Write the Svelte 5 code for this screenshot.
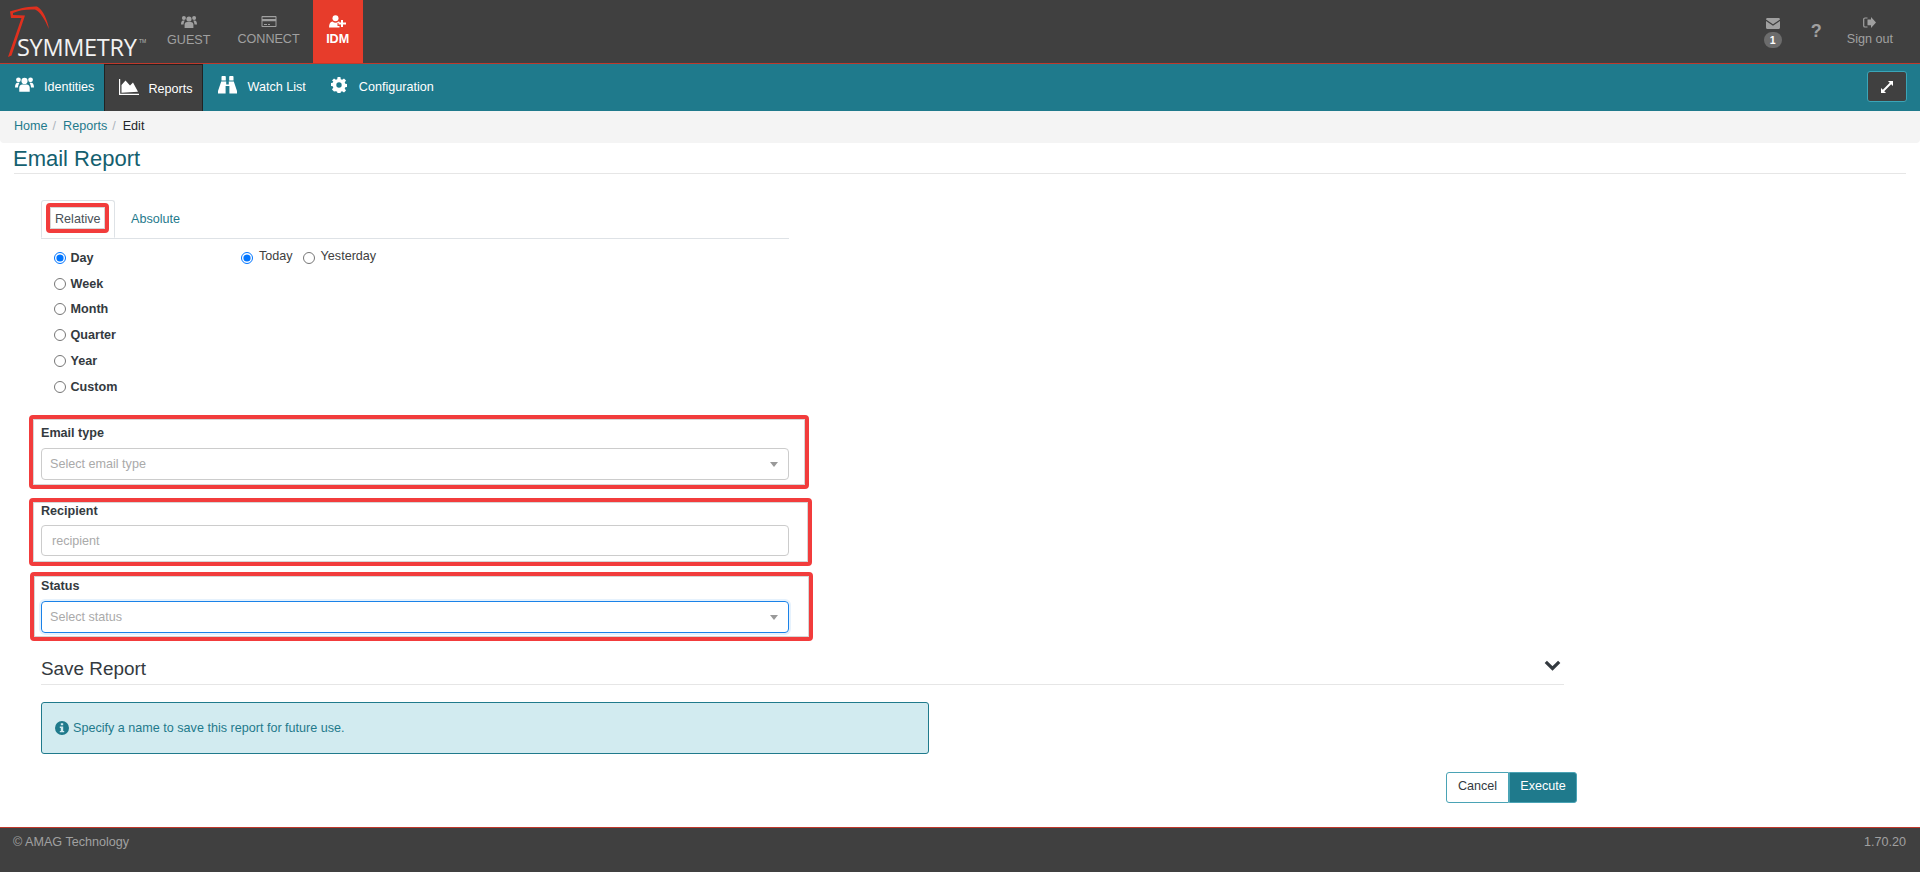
<script lang="ts">
  const ranges = ['Day', 'Week', 'Month', 'Quarter', 'Year', 'Custom'];
  let range = $state('Day');
  let when = $state('Today');
</script>

<div class="page">
  <header class="topbar">
    <div class="logo">
      <svg width="60" height="60" viewBox="0 0 60 60" class="eagle">
        <path d="M6 57 L19.5 18 L9 18 L8 11.5 C14 9.5 26 6 35 6.5 C41 10 45 19 47 29 C43 20 38 11 33 9.5 C26 9 17 10 11 13 L11 15 L23 15.5 L9.5 55.5 Z" fill="#e0301e" />
      </svg>
      <span class="wordmark">SYMMETRY</span><span class="tm">TM</span>
    </div>
    <a class="app guest" href="#guest">
      <svg width="16" height="14" viewBox="0 0 16 14"><circle cx="8" cy="4" r="2.6" /><circle cx="2.9" cy="3" r="2" /><circle cx="13.1" cy="3" r="2" /><path d="M3.6 13V9.5C3.6 7.8 5 7 6 7h4c1 0 2.400.8 2.400 2.500V13ZM0 9.500C0 7 .9 5.600 2.200 5.600h1.600C3.400 6.400 2.700 7.200 2.500 9.500ZM16 9.500C16 7 15.100 5.600 13.800 5.600h-1.600c.4.800 1.100 1.600 1.300 3.900Z" /></svg>
      <span>GUEST</span>
    </a>
    <a class="app connect" href="#connect">
      <svg width="16" height="13" viewBox="0 0 16 13"><path fill-rule="evenodd" d="M1.500 1h13c.6 0 1 .4 1 1v9c0 .6-.4 1-1 1h-13c-.6 0-1-.4-1-1V2c0-.6.4-1 1-1Zm0 1.200V4h13V2.200Zm0 4V11h13V6.200ZM3 9h3v1H3Zm4 0h2v1H7Z" /></svg>
      <span>CONNECT</span>
    </a>
    <a class="app idm" href="#idm">
      <svg width="17" height="13" viewBox="0 0 17 13"><circle cx="6.500" cy="3.200" r="3" /><path d="M0 12.500C0 8.500 1.500 6.500 3.500 6.500c1 .8 1.900 1.200 3 1.200s2-.4 3-1.200c.4 0 .7.100 1 .2V8H8.500v3h2v1.500Z" /><path d="M12 5h2v2.500h3v2h-3V12h-2V9.500H9.500v-2H12Z" /></svg>
      <span>IDM</span>
    </a>
    <div class="top-right">
      <div class="mail">
        <svg width="14" height="11" viewBox="0 0 14 11"><path d="M0 1.500C0 .7.600 0 1.400 0h11.200c.8 0 1.400.7 1.400 1.500L7 6.200ZM0 3l7 4.700L14 3v6.500c0 .8-.6 1.500-1.400 1.500H1.400C.6 11 0 10.300 0 9.500Z" /></svg>
        <span class="badge">1</span>
      </div>
      <span class="help">?</span>
      <div class="signout">
        <svg width="13" height="11" viewBox="0 0 13 11"><path d="M8 2.500V0l5 5.500L8 11V8.300H4.500V2.500Z" /><path d="M4.500 1H2C1.300 1 .7 1.500.7 2.300v6.400C.7 9.500 1.300 10 2 10h2.500" fill="none" stroke="#a0a0a0" stroke-width="1.200" /></svg>
        <span>Sign out</span>
      </div>
    </div>
  </header>

  <nav class="mainnav">
    <a href="#identities">
      <svg width="19" height="17" viewBox="0 0 16 14"><circle cx="8" cy="4" r="2.600" /><circle cx="2.900" cy="3" r="2" /><circle cx="13.100" cy="3" r="2" /><path d="M3.600 13V9.500C3.600 7.800 5 7 6 7h4c1 0 2.400.8 2.400 2.500V13ZM0 9.500C0 7 .9 5.600 2.200 5.600h1.600C3.400 6.400 2.700 7.200 2.500 9.500ZM16 9.500C16 7 15.100 5.600 13.800 5.600h-1.600c.4.800 1.100 1.600 1.300 3.900Z" /></svg>
      Identities
    </a>
    <a class="active" href="#reports">
      <svg width="20" height="16" viewBox="0 0 20 16"><path d="M0 0h1.200v14.800H20V16H0Z" /><path d="M2.500 13.800V6l4-4.500 4.500 5 3-3 5 9.300Z" /></svg>
      Reports
    </a>
    <a href="#watch">
      <svg width="19" height="18" viewBox="0 0 19 18"><path d="M3.500 1c0-.6.400-1 1-1h2.300c.6 0 1 .4 1 1v3.500H3.500ZM11.200 1c0-.6.400-1 1-1h2.300c.6 0 1 .4 1 1v3.500h-4.300ZM3.200 5.500h5v3h2.600v-3h5L19 15v2.500h-7.600V10H7.600v7.500H0V15Z" /></svg>
      Watch List
    </a>
    <a href="#config">
      <svg width="16" height="16" viewBox="0 0 16 16"><path fill-rule="evenodd" d="M6.600 0h2.800l.4 2.200 1.300.6L13 1.500l2 2-1.300 1.900.6 1.300 2.200.4v2.800l-2.200.4-.6 1.300 1.300 1.900-2 2-1.900-1.300-1.300.6-.4 2.200H6.600l-.4-2.200-1.300-.6L3 14.500l-2-2 1.300-1.900-.6-1.300L-.5 9V6.200l2.200-.4.600-1.300L1 3.500l2-2 1.900 1.300 1.300-.6ZM8 5.300a2.700 2.700 0 1 0 0 5.400 2.700 2.700 0 0 0 0-5.400Z" /></svg>
      Configuration
    </a>
    <button class="expand" aria-label="Expand">
      <svg width="12" height="12" viewBox="0 0 13 13"><path d="M7.500 0H13v5.500l-2-2-7.500 7.500 2 2H0V7.500l2 2L9.500 2Z" /></svg>
    </button>
  </nav>

  <div class="crumbs">
    <a href="#home">Home</a><span class="sep">/</span>
    <a href="#reports">Reports</a><span class="sep">/</span>
    <span class="current">Edit</span>
  </div>

  <main>
    <h1>Email Report</h1>

    <div class="form">
      <div class="tabs">
        <span class="tab on">Relative</span>
        <a class="tab" href="#absolute">Absolute</a>
      </div>

      <div class="period">
        <div class="ranges">
          {#each ranges as r}
            <label><input type="radio" name="range" value={r} bind:group={range} /> {r}</label>
          {/each}
        </div>
        <div class="days">
          <label><input type="radio" name="when" value="Today" bind:group={when} /> Today</label>
          <label><input type="radio" name="when" value="Yesterday" bind:group={when} /> Yesterday</label>
        </div>
      </div>

      <div class="field first">
        <span class="lbl">Email type</span>
        <div class="select">Select email type<i class="caret"></i></div>
      </div>
      <div class="field second">
        <span class="lbl">Recipient</span>
        <input class="text" placeholder="recipient" />
      </div>
      <div class="field third">
        <span class="lbl">Status</span>
        <div class="select focus">Select status<i class="caret"></i></div>
      </div>

      <!-- annotation boxes sit on top of the form -->
      <div class="mark m-tab"></div>
      <div class="mark m-type"></div>
      <div class="mark m-recipient"></div>
      <div class="mark m-status"></div>
    </div>

    <div class="save">
      <h2>Save Report</h2>
      <svg width="17" height="11" viewBox="0 0 17 11"><path d="M1.800 1.800 8.500 8.500l6.700-6.700" fill="none" stroke="#343a40" stroke-width="3.200" /></svg>
    </div>

    <div class="alert">
      <svg width="14" height="14" viewBox="0 0 14 14"><path fill-rule="evenodd" d="M7 0a7 7 0 1 1 0 14A7 7 0 0 1 7 0ZM5.800 2.300v2h2.400v-2ZM4.800 5.600v1.300h1v3h-1v1.300h4.400v-1.300h-1V5.600Z" /></svg>
      Specify a name to save this report for future use.
    </div>

    <div class="actions">
      <button class="cancel">Cancel</button><button class="execute">Execute</button>
    </div>
  </main>

  <footer>
    <span>© AMAG Technology</span>
    <span>1.70.20</span>
  </footer>
</div>

<style>
  :global(body) {
    margin: 0;
    font-family: "Liberation Sans", Arial, sans-serif;
    font-size: 12.6px;
    color: #212529;
    background: #fff;
  }

  a {
    text-decoration: none;
    color: #1f7a8c;
  }

  .page {
    display: flex;
    flex-direction: column;
    min-height: 872px;
  }

  .topbar {
    display: flex;
    height: 63px;
    background: #404040;
    border-bottom: 1px solid #c0392b;
    color: #a0a0a0;
  }

  .logo {
    position: relative;
    width: 145px;
    flex-shrink: 0;
  }

  .eagle {
    position: absolute;
    left: 2px;
    top: 0;
  }

  .wordmark {
    position: absolute;
    left: 17px;
    top: 31px;
    font-family: "Open Sans", sans-serif;
    font-size: 23.5px;
    letter-spacing: -0.3px;
    line-height: 32px;
    color: #f2f2f2;
  }

  .tm {
    position: absolute;
    left: 139px;
    top: 38px;
    font-size: 5px;
    color: #bbb;
  }

  .app {
    display: flex;
    flex-direction: column;
    align-items: center;
    justify-content: flex-start;
    padding: 15px 13px 0;
    gap: 4px;
    color: #a0a0a0;
  }

  .app.guest {
    padding: 15px 13px 0 22px;
  }

  .app.connect {
    padding: 15px 14px 0;
  }

  .app svg {
    fill: #a0a0a0;
  }

  .app.idm {
    background: #e73c2b;
    color: #fff;
    font-weight: 700;
    width: 50px;
    box-sizing: border-box;
    padding: 15px 0 0;
    margin-left: -1px;
  }

  .app.idm svg {
    fill: #fff;
  }

  .top-right {
    margin-left: auto;
    display: flex;
    align-items: flex-start;
  }

  .mail {
    display: flex;
    flex-direction: column;
    align-items: center;
    padding-top: 18px;
    gap: 3px;
  }

  .mail svg,
  .signout svg {
    fill: #a0a0a0;
  }

  .badge {
    width: 18px;
    height: 16px;
    border-radius: 9px;
    background: #6c6c6c;
    color: #fff;
    font-size: 10.500px;
    font-weight: 700;
    text-align: center;
    line-height: 16px;
  }

  .help {
    margin: 21px 0 0 29px;
    font-size: 18px;
    font-weight: 700;
    line-height: 20px;
  }

  .signout {
    display: flex;
    flex-direction: column;
    align-items: center;
    margin: 17px 27px 0 25px;
    gap: 4px;
  }

  .mainnav {
    display: flex;
    align-items: stretch;
    height: 47px;
    background: #1f7a8c;
  }

  .mainnav a {
    display: flex;
    align-items: center;
    gap: 10px;
    padding: 0 10px 1px 15px;
    color: #fff;
  }

  .mainnav a:nth-child(3) {
    padding: 0 14px 1px 15px;
    gap: 11px;
  }

  .mainnav a:nth-child(4) {
    padding: 0 14px 1px 11px;
    gap: 12px;
  }

  .mainnav a svg {
    fill: #fff;
    flex-shrink: 0;
    margin-bottom: 5px;
  }

  .mainnav a.active {
    background: #404040;
    border: 1px solid #222;
    border-bottom: 0;
    padding: 2px 9px 0 14px;
    gap: 9px;
  }

  .expand {
    margin: 7px 13px 0 auto;
    width: 40px;
    height: 31px;
    padding: 0;
    background: #404040;
    border: 1px solid #3ba5b8;
    border-radius: 3px;
    display: flex;
    align-items: center;
    justify-content: center;
  }

  .expand svg {
    fill: #fff;
  }

  .crumbs {
    display: flex;
    align-items: center;
    height: 32px;
    padding: 0 14px 3px;
    box-sizing: border-box;
    background: #f4f4f4;
    border-radius: 0 0 4px 4px;
  }

  .crumbs .sep {
    color: #adb5bd;
    margin: 0 7px 0 5px;
  }

  main {
    flex: 1;
    padding: 0 14px;
  }

  h1 {
    margin: 3px 0 0;
    padding-bottom: 2px;
    height: 25px;
    font-size: 22px;
    font-weight: 400;
    line-height: 25px;
    text-indent: -1px;
    color: #14606f;
    border-bottom: 1px solid #e6e6e6;
  }

  .form {
    position: relative;
    width: 748px;
    margin: 26px 0 0 27px;
  }

  .tabs {
    display: flex;
    height: 38px;
    border-bottom: 1px solid #dee2e6;
  }

  .tab {
    padding: 0 15px;
    line-height: 36px;
    height: 38px;
    box-sizing: border-box;
    border: 1px solid transparent;
  }

  .tab.on {
    width: 74px;
    padding: 0 0 0 13px;
    color: #495057;
    background: #fff;
    border-color: #dee2e6 #dee2e6 #fff;
    border-radius: 3px 3px 0 0;
  }

  .period {
    display: grid;
    grid-template-columns: 200px 1fr;
    height: 180px;
    padding-top: 6px;
  }

  .ranges {
    display: flex;
    flex-direction: column;
    padding-left: 13px;
    font-weight: 700;
  }

  .ranges label {
    display: flex;
    align-items: center;
    height: 25.800px;
    gap: 4.500px;
    color: #343a40;
  }

  input[type='radio'] {
    margin: 0;
    width: 12px;
    height: 12px;
  }

  .days {
    display: flex;
    align-items: flex-start;
    gap: 10px;
    color: #404040;
  }

  .days label {
    display: flex;
    align-items: center;
    gap: 6px;
    height: 19px;
    margin-top: 1px;
  }

  .days input[type='radio'] {
    margin-top: 4px;
  }

  .lbl {
    display: block;
    font-weight: 700;
    line-height: 16px;
    color: #343a40;
  }

  .field.first {
    margin-top: 0;
  }

  .field.second {
    margin-top: 23px;
  }

  .field.third {
    margin-top: 22px;
  }

  .select {
    position: relative;
    margin-top: 7px;
    height: 32px;
    box-sizing: border-box;
    border: 1px solid #ccc;
    border-radius: 4px;
    padding: 0 8px;
    line-height: 30px;
    color: #aaa;
  }

  .select.focus {
    border-color: #1a82e8;
    box-shadow: 0 0 0 2px #e6f2fd;
  }

  .caret {
    position: absolute;
    right: 10px;
    top: 13px;
    border: 4px solid transparent;
    border-top: 5px solid #999;
    border-bottom: 0;
  }

  .text {
    display: block;
    width: 100%;
    box-sizing: border-box;
    margin-top: 6px;
    height: 31px;
    border: 1px solid #ccc;
    border-radius: 4px;
    padding: 0 10px;
    font: inherit;
  }

  .text::placeholder {
    color: #aaa;
  }

  .mark {
    position: absolute;
    box-sizing: border-box;
    border: 4px solid #f23c3c;
    border-radius: 4px;
    box-shadow: inset 0 0 0 1px rgba(90, 90, 90, 0.25);
    pointer-events: none;
  }

  .m-tab {
    left: 5px;
    top: 3px;
    width: 63px;
    height: 30px;
  }

  .m-type {
    left: -12px;
    top: 215px;
    width: 780px;
    height: 74px;
  }

  .m-recipient {
    left: -12px;
    top: 298px;
    width: 783px;
    height: 68px;
  }

  .m-status {
    left: -11px;
    top: 372px;
    width: 783px;
    height: 69px;
  }

  .save {
    display: flex;
    align-items: center;
    justify-content: space-between;
    margin: 21px 342px 0 27px;
    height: 30px;
    border-bottom: 1px solid #e6e6e6;
  }

  .save svg {
    margin: -8px 3px 0 0;
  }

  h2 {
    margin: 0;
    font-size: 18.900px;
    font-weight: 400;
    color: #343a40;
  }

  .alert {
    display: flex;
    align-items: center;
    gap: 4px;
    width: 888px;
    height: 52px;
    box-sizing: border-box;
    margin: 17px 0 0 27px;
    padding: 0 13px;
    background: #d2ebf0;
    border: 1px solid #1f7a8c;
    border-radius: 3px;
    color: #1f7a8c;
  }

  .alert svg {
    fill: #1f7a8c;
    flex-shrink: 0;
  }

  .actions {
    display: flex;
    justify-content: flex-end;
    margin: 18px 329px 0 0;
  }

  .actions button {
    height: 31px;
    font: inherit;
    border: 1px solid #4aa3b5;
    padding: 0 0 3px;
  }

  .cancel {
    width: 63px;
    background: #fff;
    color: #343a40;
    border-radius: 3px 0 0 3px;
    border-right: 0;
  }

  .execute {
    width: 68px;
    background: #1f7a8c;
    color: #fff;
    border-radius: 0 3px 3px 0;
  }

  footer {
    display: flex;
    justify-content: space-between;
    padding: 7px 14px 0 13px;
    background: #404040;
    border-top: 1px solid #c0392b;
    color: #a0a0a0;
    height: 37px;
  }
</style>
